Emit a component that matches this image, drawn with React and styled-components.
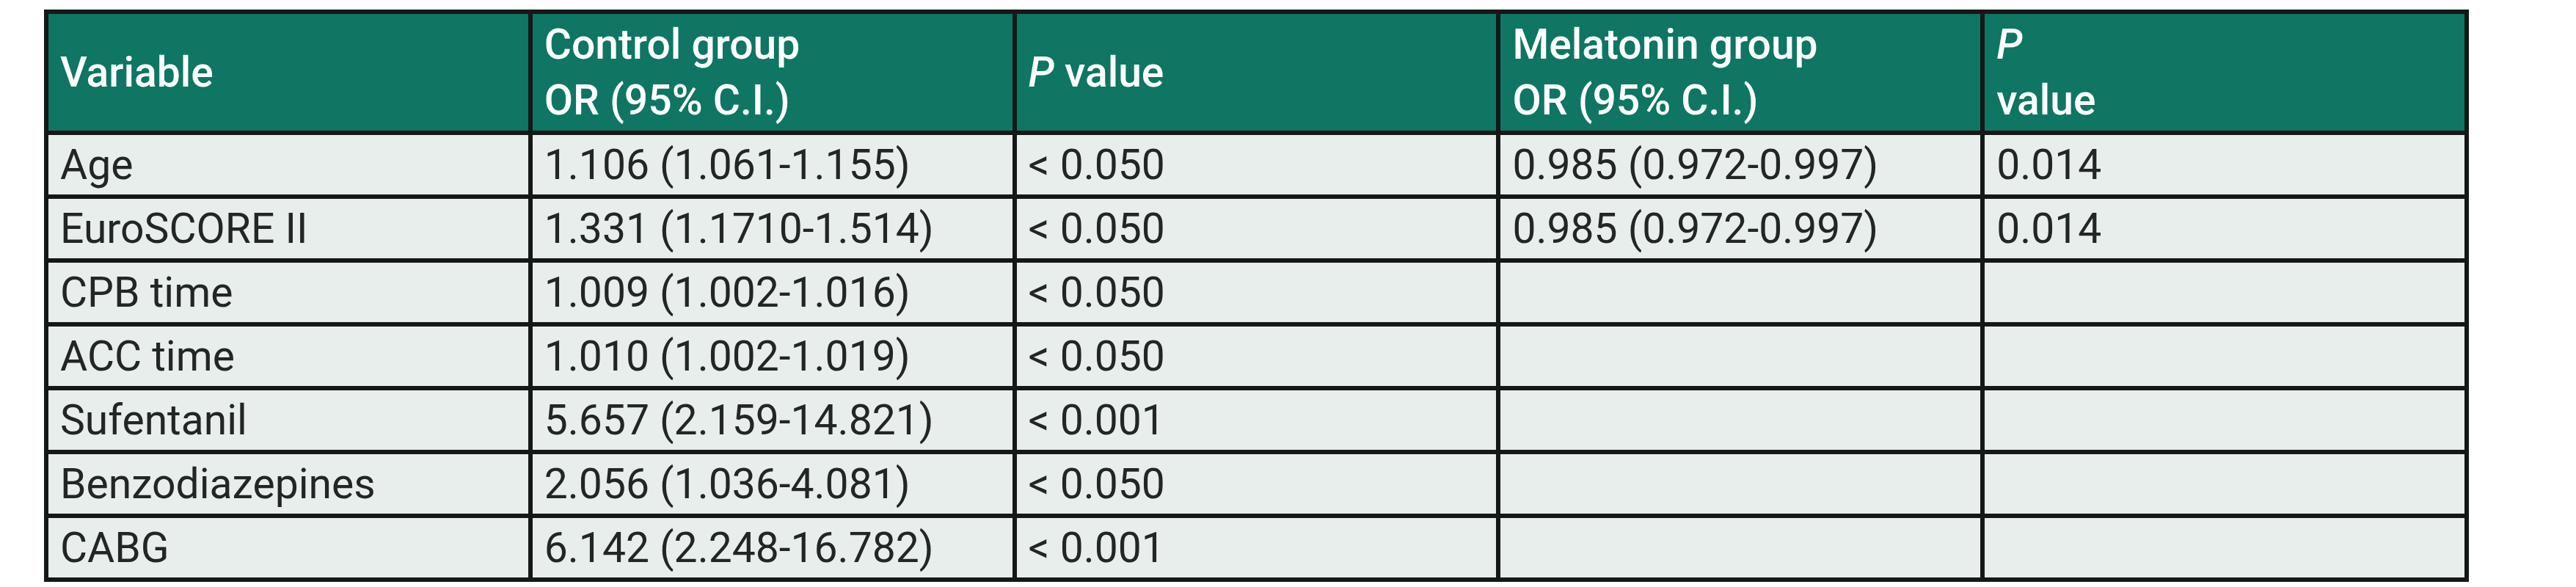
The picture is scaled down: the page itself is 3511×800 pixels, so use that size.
import React from "react";
import styled, { createGlobalStyle } from "styled-components";

const GlobalStyle = createGlobalStyle`
  html, body {
    margin: 0;
    padding: 0;
    background: #ffffff;
  }
  body {
    font-family: Roboto, "Liberation Sans", Arial, sans-serif;
  }
`;

const Page = styled.div`
  padding: 13px 0 0 60px;
  background: #ffffff;
  min-height: 800px;
  box-sizing: border-box;
`;

const Table = styled.table`
  width: 3305px;
  table-layout: fixed;
  border-collapse: separate;
  border-spacing: 0;
  border-top: 6px solid #141816;
  border-left: 6px solid #141816;
`;

const HeadCell = styled.th`
  box-sizing: border-box;
  height: 165px;
  padding: 0 16px;
  background: #0e7662;
  color: #ffffff;
  font-weight: 500;
  font-size: 57px;
  line-height: 76px;
  text-align: left;
  vertical-align: middle;
  border-right: 6px solid #141816;
  border-bottom: 6px solid #141816;
  white-space: nowrap;
`;

const Cell = styled.td`
  box-sizing: border-box;
  height: 87px;
  padding: 0 16px;
  background: #e8eeeb;
  color: #222624;
  font-size: 57px;
  font-weight: 400;
  text-align: left;
  vertical-align: middle;
  border-right: 6px solid #141816;
  border-bottom: 6px solid #141816;
  white-space: nowrap;
`;

const Em = styled.i`
  font-style: italic;
`;

const rows = [
  ["Age", "1.106 (1.061-1.155)", "< 0.050", "0.985 (0.972-0.997)", "0.014"],
  ["EuroSCORE II", "1.331 (1.1710-1.514)", "< 0.050", "0.985 (0.972-0.997)", "0.014"],
  ["CPB time", "1.009 (1.002-1.016)", "< 0.050", "", ""],
  ["ACC time", "1.010 (1.002-1.019)", "< 0.050", "", ""],
  ["Sufentanil", "5.657 (2.159-14.821)", "< 0.001", "", ""],
  ["Benzodiazepines", "2.056 (1.036-4.081)", "< 0.050", "", ""],
  ["CABG", "6.142 (2.248-16.782)", "< 0.001", "", ""],
];

export default function App() {
  return (
    <>
      <GlobalStyle />
      <Page>
        <Table>
          <thead>
            <tr>
              <HeadCell>Variable</HeadCell>
              <HeadCell>
                Control group
                <br />
                OR (95% C.I.)
              </HeadCell>
              <HeadCell>
                <Em>P</Em> value
              </HeadCell>
              <HeadCell>
                Melatonin group
                <br />
                OR (95% C.I.)
              </HeadCell>
              <HeadCell>
                <Em>P</Em>
                <br />
                value
              </HeadCell>
            </tr>
          </thead>
          <tbody>
            {rows.map((r) => (
              <tr key={r[0]}>
                {r.map((v, i) => (
                  <Cell key={i}>{v}</Cell>
                ))}
              </tr>
            ))}
          </tbody>
        </Table>
      </Page>
    </>
  );
}
